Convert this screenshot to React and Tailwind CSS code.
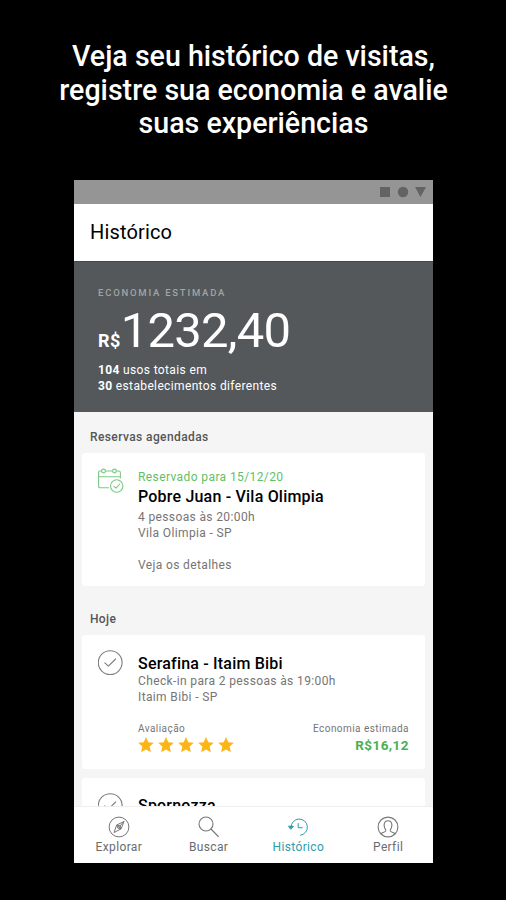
import React from "react";

function CalendarCheck() {
  return (
    <svg width="26" height="26" viewBox="0 0 26 26" fill="none" stroke="#7cc985" strokeWidth="1.1" strokeLinecap="round" strokeLinejoin="round">
      <path d="M3.500 3H2.200Q.6 3 .6 4.500V18.500Q.6 19.800 2 19.800H10.500M7.500 3h7M18.500 3h2Q22.400 3 22.400 4.500V10M.6 8.700H22.400" />
      <circle cx="5.500" cy="3" r="1.900" />
      <circle cx="16.500" cy="3" r="1.900" />
      <circle cx="18.700" cy="18" r="6.200" />
      <path d="M16 18.300l2 1.900 3.800-4.200" />
    </svg>
  );
}

function CheckCircle() {
  return (
    <svg width="26" height="26" viewBox="0 0 26 26" fill="none" stroke="#7c7c7c" strokeWidth="1.1" strokeLinecap="round" strokeLinejoin="round">
      <circle cx="12.200" cy="12.600" r="11.900" />
      <path d="M6.800 12.800l3.600 3.400 7.200-7.200" />
    </svg>
  );
}

function Star() {
  return (
    <svg width="16" height="16" viewBox="0 0 16 16" fill="#fdb515">
      <path d="M8 .1l2.300 5.100 5.500.5-4.200 3.800 1.300 5.700L8 12.400l-4.900 2.800 1.300-5.700L.2 5.700l5.500-.5z" />
    </svg>
  );
}

function ExploreIcon() {
  return (
    <svg width="22" height="22" viewBox="0 0 22 22" fill="none" stroke="#777" strokeWidth="1" strokeLinejoin="round">
      <circle cx="11" cy="11" r="9.900" />
      <path d="M16 5.500L13 13l-7 3.500L8.700 9z" />
      <path d="M8.700 9l4.300 4M11.500 10.500l4.500-5" />
      <circle cx="11" cy="11" r="1.500" />
    </svg>
  );
}

function SearchIcon() {
  return (
    <svg width="22" height="22" viewBox="0 0 22 22" fill="none" stroke="#777" strokeWidth="1.1" strokeLinecap="round">
      <circle cx="8" cy="8" r="7" />
      <path d="M13 13l7.300 7.500" />
    </svg>
  );
}

function HistoryIcon() {
  return (
    <svg width="22" height="22" viewBox="0 0 22 22" fill="none" stroke="#2f9cac" strokeWidth="1" strokeLinecap="round" strokeLinejoin="round">
      <path d="M4 11a8.200 8.200 0 1 1 9.500 8.300" />
      <path d="M1.800 10.200h4.600L4 13z" fill="#2f9cac" />
      <path d="M11.200 7.500v4.200h4" />
    </svg>
  );
}

function ProfileIcon() {
  return (
    <svg width="22" height="22" viewBox="0 0 22 22" fill="none" stroke="#777" strokeWidth="1.1" strokeLinecap="round" strokeLinejoin="round">
      <circle cx="11" cy="11" r="9.900" />
      <path d="M3.700 17.600c2-1 4-1.500 5-2.600.6-1-.6-2-1.200-3.400C6.500 8 7.300 4.800 11 4.800s4.500 3.200 3.500 6.800c-.6 1.400-1.800 2.400-1.200 3.400 1 1.100 3 1.600 5 2.600" />
    </svg>
  );
}

function NavItem({ icon, label, active }) {
  return (
    <div className={`flex flex-1 flex-col items-center pt-[9px] ${active ? "text-[#2f9cac]" : "text-[#6c6c6c]"}`}>
      {icon}
      <span className="mt-px text-[12px] leading-[16px] tracking-[0.360px]">{label}</span>
    </div>
  );
}

export default function App() {
  return (
    <div className="flex h-[900px] w-[506px] flex-col items-center overflow-hidden bg-black font-['Roboto',sans-serif]">
      <h1 className="mt-10 h-[140px] pl-px text-center text-[28.600px] font-medium leading-[33.500px] whitespace-nowrap text-white">
        Veja seu histórico de visitas,
        <br />
        registre sua economia e avalie
        <br />
        suas experiências
      </h1>

      <div className="ml-px flex h-[683px] w-[359px] shrink-0 flex-col overflow-hidden bg-[#f5f5f5]">
        <div className="flex h-6 shrink-0 items-center justify-end bg-[#959595] pr-[7px]">
          <svg width="46" height="12" viewBox="0 0 46 12" fill="#636363">
            <path d="M0 1h10v10H0zM35 1h11l-5.500 10z" />
            <circle cx="23" cy="6" r="5.200" />
          </svg>
        </div>
        <div className="flex h-[57px] shrink-0 items-center bg-white pl-4 text-[20px] tracking-[0.150px] text-black">
          <span className="mt-[-2px]">Histórico</span>
        </div>

        <section className="h-[151px] shrink-0 border-t border-[#45494b] bg-[#54585b] pl-6 pt-[24px] text-white">
          <div className="text-[9.500px] font-medium leading-[14px] tracking-[1.780px] text-[#a2a4a5]">ECONOMIA ESTIMADA</div>
          <div className="flex h-[62px] items-baseline whitespace-nowrap">
            <span className="text-[18px] font-bold tracking-[0.5px]">R$</span>
            <span className="text-[49px] leading-[62px] tracking-[-0.800px]">1232,40</span>
          </div>
          <p className="text-[12px] leading-[16px] tracking-[0.360px]">
            <b>104</b> usos totais em
            <br />
            <b>30</b> estabelecimentos diferentes
          </p>
        </section>

        <main className="h-[394px] shrink-0 overflow-hidden px-2 text-[12px] text-[#757575]">
          <h2 className="h-[41px] pl-2 pt-[17px] text-[12px] font-medium leading-[16px] tracking-[0.400px] text-[#555]">Reservas agendadas</h2>
          <article className="flex h-[133px] w-[343px] rounded-[3px] bg-white pl-4 pt-[14px]">
            <div className="w-10 shrink-0 pt-px"><CalendarCheck /></div>
            <div className="whitespace-nowrap">
              <div className="mt-[2px] leading-[16px] tracking-[0.400px] text-[#62bf65]">Reservado para 15/12/20</div>
              <h3 className="text-[16px] font-medium leading-[24px] tracking-[0.200px] text-black">Pobre Juan - Vila Olimpia</h3>
              <div className="leading-[16px] tracking-[0.370px]">4 pessoas às 20:00h</div>
              <div className="leading-[16px] tracking-[0.370px]">Vila Olimpia - SP</div>
              <div className="mt-4 leading-[16px] tracking-[0.370px]">Veja os detalhes</div>
            </div>
          </article>
          <h2 className="h-[49px] pl-2 pt-[25px] text-[12px] font-medium leading-[16px] tracking-[0.350px] text-[#555]">Hoje</h2>
          <article className="flex h-[134px] w-[343px] rounded-[3px] bg-white pl-4 pt-[15px]">
            <div className="w-10 shrink-0"><CheckCircle /></div>
            <div className="w-[271px] whitespace-nowrap">
              <h3 className="mt-[2px] text-[16px] font-medium leading-[24px] tracking-[0.200px] text-black">Serafina - Itaim Bibi</h3>
              <div className="mt-[-3px] leading-[16px] tracking-[0.370px]">Check-in para 2 pessoas às 19:00h</div>
              <div className="leading-[16px] tracking-[0.370px]">Itaim Bibi - SP</div>
              <div className="mt-[17px] flex justify-between text-[10px] leading-[14px] tracking-[0.450px]">
                <span>Avaliação</span>
                <span>Economia estimada</span>
              </div>
              <div className="flex h-[18px] items-center justify-between">
                <div className="flex gap-1"><Star /><Star /><Star /><Star /><Star /></div>
                <span className="text-[13.500px] font-bold leading-[18px] tracking-[0.450px] text-[#4caf50]">R$16,12</span>
              </div>
            </div>
          </article>
          <article className="mt-[9px] flex h-[134px] w-[343px] rounded-[3px] bg-white pl-4 pt-[15px]">
            <div className="w-10 shrink-0"><CheckCircle /></div>
            <h3 className="mt-px text-[16px] font-medium leading-[24px] tracking-[0.200px] text-black">Spornozza</h3>
          </article>
        </main>

        <nav className="flex h-[57px] shrink-0 border-t border-[#eeeeee] bg-white">
          <NavItem icon={<ExploreIcon />} label="Explorar" />
          <NavItem icon={<SearchIcon />} label="Buscar" />
          <NavItem icon={<HistoryIcon />} label="Histórico" active />
          <NavItem icon={<ProfileIcon />} label="Perfil" />
        </nav>
      </div>
    </div>
  );
}
